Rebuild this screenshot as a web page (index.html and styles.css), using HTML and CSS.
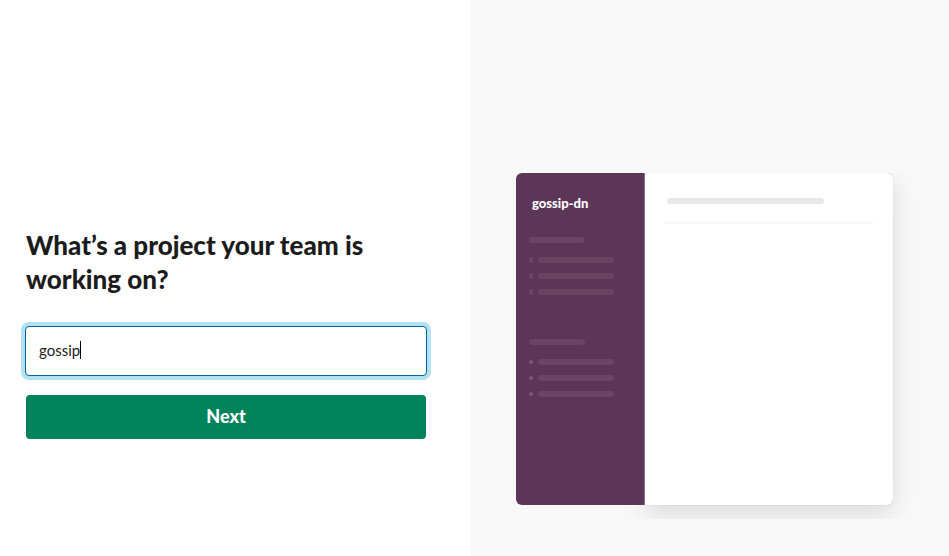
FILE: index.html
```html
<!DOCTYPE html>
<html lang="en">
<head>
<meta charset="utf-8">
<meta name="viewport" content="width=device-width, initial-scale=1">
<title>Set up your team</title>
<link rel="stylesheet" href="styles.css">
</head>
<body>
<main class="setup">
  <section class="question">
    <form class="form">
      <label class="title" for="project">What’s a project your team is working on?</label>
      <div class="field">
        <input class="input" id="project" type="text" value="gossip" autocomplete="off" spellcheck="false">
        <span class="caret"></span>
      </div>
      <button class="next" type="button">Next</button>
    </form>
  </section>
  <section class="showcase">
    <div class="stage">
      <div class="window">
        <aside class="sidebar">
          <h2 class="team">gossip-dn</h2>
          <div class="group">
            <div class="bar heading"></div>
            <div class="row"><span class="hash">#</span><div class="bar"></div></div>
            <div class="row"><span class="hash">#</span><div class="bar"></div></div>
            <div class="row"><span class="hash">#</span><div class="bar"></div></div>
          </div>
          <div class="group">
            <div class="bar heading"></div>
            <div class="row"><span class="dot"></span><div class="bar"></div></div>
            <div class="row"><span class="dot"></span><div class="bar"></div></div>
            <div class="row"><span class="dot"></span><div class="bar"></div></div>
          </div>
        </aside>
        <div class="content">
          <div class="topic"></div>
          <div class="divider"></div>
        </div>
      </div>
    </div>
  </section>
</main>
</body>
</html>
```
FILE: styles.css
```css
* {
  box-sizing: border-box;
}

body {
  margin: 0;
  background: #fff;
  color: #1d1c1d;
  font-family: Lato, "Liberation Sans", sans-serif;
}

.setup {
  display: grid;
  grid-template-columns: 471fr 478fr;
  min-height: 100vh;
}

.question {
  display: flex;
  align-items: center;
  padding: 111px 44px 0 25px;
}

.form {
  display: flex;
  flex-direction: column;
  width: 100%;
}

.title {
  margin: 0 1px 30px;
  font-size: 26px;
  font-weight: 900;
  line-height: 34px;
}

.field {
  position: relative;
  margin-bottom: 19px;
}

.input {
  display: block;
  width: 100%;
  height: 50px;
  padding: 0 13px 2px;
  border: 1px solid #0b5fa5;
  border-radius: 4px;
  outline: none;
  background: #fff;
  box-shadow: 0 0 0 4px #b2e2f1;
  color: #1d1c1d;
  font: 400 15px/22px Lato, "Liberation Sans", sans-serif;
}

.caret {
  position: absolute;
  top: 15px;
  left: 55px;
  width: 1px;
  height: 18px;
  background: #000;
}

.next {
  height: 44px;
  margin: 0 1px;
  padding: 0 0 2px;
  border: 0;
  border-radius: 4px;
  background: #00825b;
  color: #fff;
  font: 900 18px/22px Lato, "Liberation Sans", sans-serif;
}

.showcase {
  display: flex;
  align-items: center;
  padding: 136px 33px 0 45px;
  background: #f8f8f8;
}

.stage {
  width: 100%;
  padding: 0 23px 14px 0;
  overflow: hidden;
}

.window {
  display: flex;
  min-height: 332px;
}

.sidebar {
  flex: 0 0 129px;
  padding: 22px 0 0 13px;
  border-right: 1px solid #8d728a;
  border-radius: 6px 0 0 6px;
  background: #5c3659;
  z-index: 1;
}

.team {
  margin: 0 0 26px 3px;
  color: #fff;
  font-size: 13px;
  font-weight: 900;
  line-height: 16px;
}

.group {
  margin-bottom: 39px;
}

.bar {
  width: 76px;
  height: 6px;
  border-radius: 3px;
  background: #694464;
}

.heading {
  width: 56px;
  margin-bottom: 9px;
}

.row {
  display: flex;
  align-items: center;
  gap: 5px;
  height: 16px;
}

.hash {
  width: 4px;
  color: #744f70;
  font-size: 7px;
  font-weight: 700;
  line-height: 8px;
}

.dot {
  width: 4px;
  height: 4px;
  border-radius: 50%;
  background: #7a5876;
}

.content {
  flex: 1;
  padding: 25px 20px 0 19px;
  border-radius: 0 6px 6px 0;
  background: #fff;
  box-shadow: 0 0 1px rgba(0, 0, 0, 0.3), 0 8px 24px rgba(0, 0, 0, 0.12);
}

.topic {
  width: 75%;
  height: 6px;
  margin: 0 0 18px 3px;
  border-radius: 3px;
  background: #e8e8e8;
}

.divider {
  height: 2px;
  border-radius: 1px;
  background: #f6f6f6;
}
```
